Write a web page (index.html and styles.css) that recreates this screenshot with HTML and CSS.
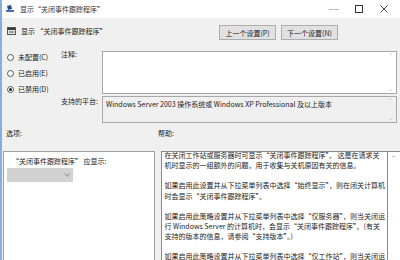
FILE: index.html
```html
<!DOCTYPE html>
<html lang="zh-CN">
<head>
    <meta charset="UTF-8">
    <title>显示“关闭事件跟踪程序”</title>
    <link rel="stylesheet" href="styles.css">
</head>
<body>
    <div class="window">
        <div class="titlebar">
            <svg class="app-icon" width="8" height="8" viewBox="0 0 8 8">
                <path d="M1 1 L5 0 L6 4 L2 5 Z" fill="#2b4c8c"/>
                <rect x="0" y="5" width="8" height="2" fill="#4a6fb0"/>
            </svg>
            <span class="title">显示“关闭事件跟踪程序”</span>
            <div class="controls">
                <span class="ctl"><svg width="10" height="10" viewBox="0 0 10 10"><path d="M0 5.5 H10" stroke="#bbb" stroke-width="1"/></svg></span>
                <span class="ctl"><svg width="10" height="10" viewBox="0 0 10 10"><rect x="1.5" y="1.5" width="7" height="7" fill="none" stroke="#333" stroke-width="1"/></svg></span>
                <span class="ctl"><svg width="10" height="10" viewBox="0 0 10 10"><path d="M1.5 1.5 L8.5 8.5 M8.5 1.5 L1.5 8.5" stroke="#444" stroke-width="1"/></svg></span>
            </div>
        </div>

        <div class="content">
            <div class="header">
                <svg class="set-icon" width="9" height="8" viewBox="0 0 9 8">
                    <rect x="0.5" y="0.5" width="8" height="7" fill="#e8e8e8" stroke="#555"/>
                    <rect x="1" y="1" width="7" height="2" fill="#3a3a3a"/>
                    <rect x="2" y="4" width="5" height="2" fill="#9a9a9a"/>
                </svg>
                <span class="header-text">显示 “关闭事件跟踪程序”</span>
                <div class="nav">
                    <button class="btn">上一个设置(P)</button>
                    <button class="btn">下一个设置(N)</button>
                </div>
            </div>

            <div class="top">
                <div class="radios">
                    <label class="radio"><span class="dot"></span>未配置(C)</label>
                    <label class="radio"><span class="dot"></span>已启用(E)</label>
                    <label class="radio"><span class="dot on"></span>已禁用(D)</label>
                </div>
                <div class="lbl lbl-note">注释:</div>
                <div class="box note">
                    <div class="box-area"></div>
                    <div class="sbar"><span>&#8963;</span><span>&#8964;</span></div>
                </div>
                <div class="lbl lbl-plat">支持的平台:</div>
                <div class="box plat">
                    <div class="box-area">Windows Server 2003 操作系统或 Windows XP Professional 及以上版本</div>
                    <div class="sbar"><span>&#8963;</span><span>&#8964;</span></div>
                </div>
            </div>

            <div class="sec-labels">
                <span class="sec-opt">选项:</span>
                <span class="sec-help">帮助:</span>
            </div>

            <div class="panels">
                <div class="options">
                    <div class="opt-label">“关闭事件跟踪程序” 应显示:</div>
                    <div class="select"><span class="chev"></span></div>
                </div>
                <div class="help">
                    <div class="help-text">
                        <p>在关闭工作站或服务器时可显示“关闭事件跟踪程序”。 这是在请求关<br>机时显示的一组额外的问题，用于收集与关机原因有关的信息。</p>
                        <p>如果启用此设置并从下拉菜单列表中选择“始终显示”，则在闭关计算机<br>时会显示“关闭事件跟踪程序”。</p>
                        <p>如果启用此策略设置并从下拉菜单列表中选择“仅服务器”，则当关闭运<br>行 Windows Server 的计算机时，会显示“关闭事件跟踪程序”。(有关<br>支持的版本的信息，请参阅“支持版本”。)</p>
                        <p>如果启用此策略设置并从下拉菜单列表中选择“仅工作站”，则当关闭运</p>
                    </div>
                    <div class="sbar"><span>&#8963;</span></div>
                </div>
            </div>
        </div>
    </div>
</body>
</html>
```

FILE: styles.css
```css
html, body {
    margin: 0;
    padding: 0;
}

body {
    width: 400px;
    height: 260px;
    overflow: hidden;
    font-family: "Noto Sans CJK SC", "Noto Sans", sans-serif;
    font-size: 7px;
    color: #222;
}

.window {
    height: 260px;
    border-left: 2px solid #86aee0;
    background: #f0f0f0;
}

.titlebar {
    height: 18px;
    background: #fff;
    display: flex;
    align-items: center;
}

.app-icon {
    margin-left: 4px;
    margin-right: 6px;
}

.title {
    font-size: 7px;
    color: #333;
}

.controls {
    margin-left: auto;
    display: flex;
    margin-right: 4px;
}

.ctl {
    width: 25px;
    height: 18px;
    display: flex;
    align-items: center;
    justify-content: center;
}

.header {
    height: 31px;
    display: flex;
    align-items: center;
    padding-left: 5px;
}

.set-icon {
    margin-right: 5px;
    margin-top: -5px;
}

.header-text {
    margin-top: -5px;
}

.nav {
    margin-left: auto;
    margin-right: 62px;
    display: flex;
    gap: 5px;
    margin-top: -2px;
}

.btn {
    width: 57px;
    height: 15px;
    padding: 0;
    border: 1px solid #adadad;
    background: #e1e1e1;
    font-family: inherit;
    font-size: 7px;
    color: #222;
}

.top {
    display: grid;
    grid-template-columns: 56px 44px 295px;
    grid-template-rows: 45px 27px;
    row-gap: 2px;
}

.radios {
    grid-row: 1 / 3;
    padding-left: 5px;
}

.radio {
    height: 16px;
    display: flex;
    align-items: center;
}

.dot {
    width: 5px;
    height: 5px;
    border: 1px solid #555;
    border-radius: 50%;
    background: #fff;
    margin-right: 4px;
    position: relative;
}

.dot.on::after {
    content: "";
    position: absolute;
    left: 1px;
    top: 1px;
    width: 3px;
    height: 3px;
    border-radius: 50%;
    background: #222;
}

.lbl {
    padding-left: 3px;
    line-height: 10px;
}

.box {
    display: flex;
    border: 1px solid #a8a8a8;
}

.note {
    margin-top: 2px;
    background: #fff;
}

.plat {
    background: #f0f0f0;
}

.box-area {
    flex: 1;
    padding: 2px 3px;
    white-space: nowrap;
}

.sbar {
    width: 11px;
    display: flex;
    flex-direction: column;
    justify-content: space-between;
    align-items: center;
    color: #b8b8b8;
    font-size: 6px;
    line-height: 8px;
}

.sec-labels {
    display: flex;
    margin-top: 5px;
    line-height: 10px;
    height: 10px;
}

.sec-opt {
    padding-left: 4px;
}

.sec-help {
    margin-left: 136px;
}

.panels {
    display: flex;
    gap: 6px;
    margin-top: 13px;
    padding-left: 1px;
}

.options {
    width: 152px;
    height: 120px;
    border: 1px solid #a0a0a0;
    background: #fff;
}

.opt-label {
    padding-left: 8px;
    padding-top: 4px;
    line-height: 10px;
}

.select {
    width: 66px;
    height: 14px;
    margin: 2px 0 0 3px;
    background: #d2d2d2;
    position: relative;
}

.chev {
    position: absolute;
    right: 4px;
    top: 4px;
    width: 3px;
    height: 3px;
    border-right: 1px solid #9a9a9a;
    border-bottom: 1px solid #9a9a9a;
    transform: rotate(45deg);
}

.help {
    display: flex;
    width: 240px;
    height: 120px;
    border: 1px solid #8a8a8a;
    border-right: none;
    background: #fff;
    overflow: hidden;
}

.help-text {
    width: 223px;
    border-right: 1px solid #8a8a8a;
    padding-left: 2px;
    line-height: 10.2px;
    white-space: nowrap;
}

.help-text p {
    margin: 0 0 10px 0;
}

.help-text p:first-child {
    margin-top: -2px;
}

.help .sbar {
    justify-content: flex-start;
    padding-top: 2px;
    color: #888;
}
```
